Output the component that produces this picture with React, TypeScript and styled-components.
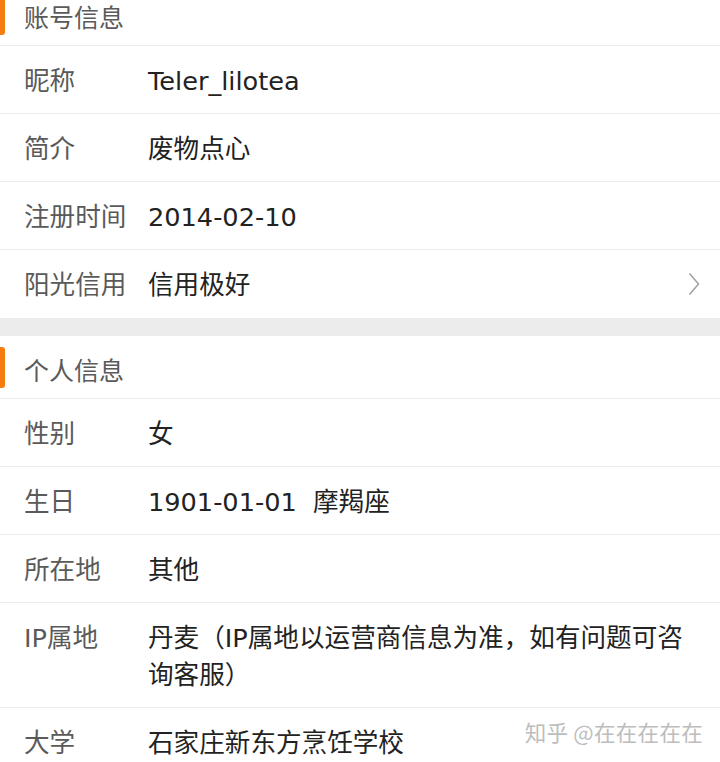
import React from 'react';
import styled, { createGlobalStyle } from 'styled-components';

const GlobalStyle = createGlobalStyle`
  html, body {
    margin: 0;
    padding: 0;
    background: #ffffff;
  }
  body {
    font-family: 'DejaVu Sans', 'Noto Sans CJK SC', sans-serif;
    -webkit-font-smoothing: antialiased;
  }
`;

const Page = styled.div`
  position: relative;
  width: 720px;
  height: 762px;
  overflow: hidden;
  background: #ffffff;
`;

// the list is scrolled a little, so the first header sits partly above the top edge
const Scroller = styled.div`
  display: flex;
  flex-direction: column;
  margin-top: -17px;
`;

const Section = styled.section`
  display: flex;
  flex-direction: column;
  background: #ffffff;
`;

const Gap = styled.div`
  height: 18px;
  background: #ececec;
`;

const SectionHeader = styled.div`
  position: relative;
  display: flex;
  align-items: center;
  height: 63px;
  padding: 4px 0 0 24px;
  box-sizing: border-box;
  border-bottom: 1px solid #ebebeb;
  font-size: 25px;
  line-height: 1.2;
  color: #5a5a5a;
  font-family: 'Noto Sans CJK SC', sans-serif;

  &::before {
    content: '';
    position: absolute;
    left: 0;
    top: 11px;
    width: 5px;
    height: 41px;
    border-radius: 0 3px 3px 0;
    background: #f57d0f;
  }
`;

const Row = styled.div<{ $last?: boolean }>`
  display: flex;
  align-items: flex-start;
  min-height: 68px;
  padding: 17px 14px 13px 24px;
  box-sizing: border-box;
  border-bottom: ${({ $last }) => ($last ? 'none' : '1px solid #ebebeb')};
`;

const Label = styled.div`
  flex: 0 0 124px;
  font-size: 25.6px;
  line-height: 37px;
  color: #5a5a5a;
  font-family: 'DejaVu Sans', 'Noto Sans CJK SC', sans-serif;
`;

const Value = styled.div`
  flex: 1;
  font-size: 25.6px;
  line-height: 37px;
  color: #222222;
  white-space: pre-wrap;
  font-family: 'DejaVu Sans', 'Noto Sans CJK SC', sans-serif;
`;

const Chevron = styled.svg`
  flex: 0 0 auto;
  margin: 5px 6px 0 0;
`;

const Watermark = styled.div`
  position: absolute;
  right: 17px;
  bottom: 15px;
  font-size: 21.5px;
  color: #bdbdbd;
  font-family: 'Noto Sans CJK SC', sans-serif;
  letter-spacing: 0.3px;
`;

type Item = { label: string; value: string; arrow?: boolean };

const account: Item[] = [
  { label: '昵称', value: 'Teler_lilotea' },
  { label: '简介', value: '废物点心' },
  { label: '注册时间', value: '2014-02-10' },
  { label: '阳光信用', value: '信用极好', arrow: true },
];

const personal: Item[] = [
  { label: '性别', value: '女' },
  { label: '生日', value: '1901-01-01  摩羯座' },
  { label: '所在地', value: '其他' },
  { label: 'IP属地', value: '丹麦（IP属地以运营商信息为准，如有问题可咨询客服）' },
  { label: '大学', value: '石家庄新东方烹饪学校' },
];

const renderRows = (items: Item[]) =>
  items.map((it, i) => (
    <Row key={it.label} $last={i === items.length - 1}>
      <Label>{it.label}</Label>
      <Value>{it.value}</Value>
      {it.arrow && (
        <Chevron width="12" height="24" viewBox="0 0 12 24">
          <path d="M1.5 1.5 L10.5 12 L1.5 22.5" fill="none" stroke="#a0a0a0" strokeWidth="1.5" />
        </Chevron>
      )}
    </Row>
  ));

export default function App() {
  return (
    <Page>
      <GlobalStyle />
      <Scroller>
        <Section>
          <SectionHeader>账号信息</SectionHeader>
          {renderRows(account)}
        </Section>
        <Gap />
        <Section>
          <SectionHeader>个人信息</SectionHeader>
          {renderRows(personal)}
        </Section>
      </Scroller>
      <Watermark>知乎 @在在在在在</Watermark>
    </Page>
  );
}
